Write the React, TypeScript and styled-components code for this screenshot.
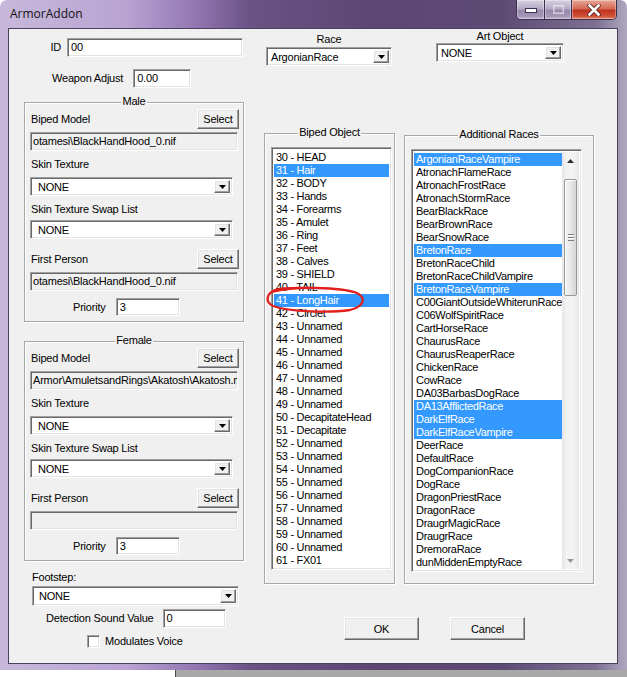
import React from 'react';
import styled, { createGlobalStyle, css } from 'styled-components';

const GlobalStyle = createGlobalStyle`
  html, body {
    margin: 0;
    padding: 0;
    background: #fff;
  }
  body {
    font-family: "Liberation Sans", Arial, sans-serif;
    font-size: 11px;
    letter-spacing: -0.2px;
    color: #000;
  }
`;

// classic 3D edges
const sunken = css`
  box-sizing: border-box;
  border: 1px solid;
  border-color: #a0a0a0 #fff #fff #a0a0a0;
  box-shadow: inset 1px 1px 0 #696969, inset -1px -1px 0 #e3e3e3;
`;

const raised = css`
  box-sizing: border-box;
  border: 1px solid;
  border-color: #fff #696969 #696969 #fff;
  box-shadow: inset -1px -1px 0 #a0a0a0, inset 1px 1px 0 #e3e3e3;
  background: #f0f0f0;
`;

const BIPED_NAMES: Record<number, string> = {
  30: 'HEAD', 31: 'Hair', 32: 'BODY', 33: 'Hands', 34: 'Forearms', 35: 'Amulet',
  36: 'Ring', 37: 'Feet', 38: 'Calves', 39: 'SHIELD', 40: 'TAIL', 41: 'LongHair',
  42: 'Circlet', 50: 'DecapitateHead', 51: 'Decapitate', 61: 'FX01',
};
const BIPED_SLOTS = Array.from({ length: 32 }, (_, i) => {
  const n = 30 + i;
  return { label: `${n} - ${BIPED_NAMES[n] ?? 'Unnamed'}`, selected: n === 31 || n === 41 };
});

const RACES = [
  'ArgonianRaceVampire', 'AtronachFlameRace', 'AtronachFrostRace', 'AtronachStormRace',
  'BearBlackRace', 'BearBrownRace', 'BearSnowRace', 'BretonRace', 'BretonRaceChild',
  'BretonRaceChildVampire', 'BretonRaceVampire', 'C00GiantOutsideWhiterunRace',
  'C06WolfSpiritRace', 'CartHorseRace', 'ChaurusRace', 'ChaurusReaperRace', 'ChickenRace',
  'CowRace', 'DA03BarbasDogRace', 'DA13AfflictedRace', 'DarkElfRace', 'DarkElfRaceVampire',
  'DeerRace', 'DefaultRace', 'DogCompanionRace', 'DogRace', 'DragonPriestRace', 'DragonRace',
  'DraugrMagicRace', 'DraugrRace', 'DremoraRace', 'dunMiddenEmptyRace',
];
const SELECTED_RACES = [0, 7, 10, 19, 20, 21];

/* ---------- window chrome ---------- */

const Window = styled.div`
  width: 627px;
  height: 670px;
  box-sizing: border-box;
  padding: 0 9px 6px 8px;
  display: flex;
  flex-direction: column;
  border-radius: 7px 7px 0 0;
  background: linear-gradient(90deg, #c7b8db 0%, #b9a4d2 20%, #9377b3 31%, #6a5284 40%, #5c4773 60%, #5e4b74 80%, #7d6f93 95%, #b0a8bf 100%);
`;

const TitleBar = styled.div`
  height: 28px;
  display: flex;
  align-items: flex-start;
`;

const TitleText = styled.div`
  margin-left: 2px;
  padding-top: 6px;
  line-height: 16px;
  font-family: "Open Sans", "Noto Sans", sans-serif;
  font-size: 12px;
  letter-spacing: 0;
  color: #111;
`;

const CaptionButtons = styled.div`
  margin-left: auto;
  margin-right: 1px;
  display: flex;
  height: 20px;
  box-sizing: border-box;
  border: 1px solid #3b2f4d;
  border-top: none;
  border-radius: 0 0 5px 5px;
  overflow: hidden;
`;

const CaptionButton = styled.div<{ $w: number; $close?: boolean }>`
  width: ${({ $w }) => $w}px;
  display: flex;
  align-items: center;
  justify-content: center;
  box-shadow: inset 0 0 0 1px rgba(255, 255, 255, 0.35);
  background: ${({ $close }) =>
    $close
      ? 'linear-gradient(180deg, #e9a897 0%, #d46a55 45%, #c0341f 55%, #d0503a 85%, #e48a6a 100%)'
      : 'linear-gradient(180deg, #d7d0e0 0%, #b6abc6 45%, #978aac 55%, #a396b6 85%, #bdb2cc 100%)'};
  & + & {
    border-left: 1px solid #3b2f4d;
  }
`;

const Desktop = styled.div`
  display: flex;
  height: 7px;
`;

const DesktopPaper = styled.div`
  width: 175px;
  background: #fff;
  border-right: 1px solid #4a4a4a;
`;

const DesktopShade = styled.div`
  flex: 1;
  background: #a9a9a9;
`;

const Client = styled.div`
  flex: 1;
  display: flex;
  flex-direction: column;
  background: #f0f0f0;
  border: 1px solid #4c405f;
`;

/* ---------- basic controls ---------- */

const Label = styled.div`
  line-height: 13px;
  white-space: nowrap;
`;

const FieldLabel = styled(Label)<{ $mt: number }>`
  margin-top: ${({ $mt }) => $mt}px;
  padding-left: 1px;
`;

const Edit = styled.div<{ $w: number; $h?: number; $readOnly?: boolean; $mt?: number }>`
  ${sunken};
  flex: none;
  width: ${({ $w }) => $w}px;
  height: ${({ $h = 19 }) => $h}px;
  line-height: ${({ $h = 19 }) => $h - 2}px;
  margin-top: ${({ $mt = 0 }) => $mt}px;
  padding-left: ${({ $readOnly }) => ($readOnly ? 2 : 3)}px;
  background: ${({ $readOnly }) => ($readOnly ? '#f0f0f0' : '#fff')};
  white-space: nowrap;
  overflow: hidden;
`;

const ComboBox = styled.div<{ $w: number; $h?: number; $mt?: number; $ml?: number }>`
  ${sunken};
  flex: none;
  display: flex;
  width: ${({ $w }) => $w}px;
  height: ${({ $h = 19 }) => $h}px;
  margin-top: ${({ $mt = 0 }) => $mt}px;
  margin-left: ${({ $ml = 0 }) => $ml}px;
  padding: 2px;
  background: #fff;
`;

const ComboText = styled.div<{ $indent: number }>`
  flex: 1;
  padding-left: ${({ $indent }) => $indent}px;
  display: flex;
  align-items: center;
  white-space: nowrap;
  overflow: hidden;
`;

const ComboButton = styled.div`
  ${raised};
  width: 16px;
  display: flex;
  align-items: center;
  justify-content: center;
`;

const PushButton = styled.div<{ $w: number; $h: number }>`
  ${raised};
  flex: none;
  width: ${({ $w }) => $w}px;
  height: ${({ $h }) => $h}px;
  display: flex;
  align-items: center;
  justify-content: center;
`;

const CheckBox = styled.div`
  ${sunken};
  width: 13px;
  height: 13px;
  background: #fff;
`;

function DownArrow({ color = '#000' }: { color?: string }) {
  return (
    <svg width="7" height="4" viewBox="0 0 7 4">
      <path d="M0 0h7L3.5 4z" fill={color} />
    </svg>
  );
}

function Combo({ value, w, h, indent = 2, mt, ml }: { value: string; w: number; h?: number; indent?: number; mt?: number; ml?: number }) {
  return (
    <ComboBox $w={w} $h={h} $mt={mt} $ml={ml}>
      <ComboText $indent={indent}>{value}</ComboText>
      <ComboButton><DownArrow /></ComboButton>
    </ComboBox>
  );
}

/* ---------- group boxes ---------- */

const GroupBox = styled.div<{ $w: number; $h: number; $mt?: number; $ml?: number; $pad?: string }>`
  position: relative;
  box-sizing: border-box;
  flex: none;
  display: flex;
  flex-direction: column;
  width: ${({ $w }) => $w}px;
  height: ${({ $h }) => $h}px;
  margin-top: ${({ $mt = 0 }) => $mt}px;
  margin-left: ${({ $ml = 0 }) => $ml}px;
  padding: ${({ $pad = '0' }) => $pad};
  border: 1px solid #a7a7a7;
  box-shadow: inset 1px 1px 0 #fff, 1px 1px 0 #fff;
`;

const GroupTitle = styled.div`
  position: absolute;
  top: -8px;
  left: 0;
  right: 0;
  text-align: center;
  line-height: 13px;
  pointer-events: none;
`;

const GroupTitleText = styled.span`
  background: #f0f0f0;
  padding: 0 1px;
`;

const HeaderRow = styled.div<{ $mt?: number }>`
  display: flex;
  align-items: center;
  justify-content: space-between;
  margin-top: ${({ $mt = 0 }) => $mt}px;
  padding-left: 1px;
`;

const PriorityRow = styled.div`
  display: flex;
  align-items: center;
  gap: 10px;
  margin-top: 7px;
  padding-left: 43px;
`;

type ArmorGroupProps = {
  title: string;
  model: string;
  firstPerson: string;
  mt?: number;
};

function ArmorGroup({ title, model, firstPerson, mt }: ArmorGroupProps) {
  return (
    <GroupBox $w={220} $h={220} $mt={mt} $pad="6px 4px 0 5px">
      <GroupTitle><GroupTitleText>{title}</GroupTitleText></GroupTitle>
      <HeaderRow>
        <Label>Biped Model</Label>
        <PushButton $w={42} $h={20}>Select</PushButton>
      </HeaderRow>
      <Edit $w={208} $mt={3} $readOnly>{model}</Edit>
      <FieldLabel $mt={7}>Skin Texture</FieldLabel>
      <Combo value="NONE" w={203} indent={5} mt={6} />
      <FieldLabel $mt={7}>Skin Texture Swap List</FieldLabel>
      <Combo value="NONE" w={203} indent={5} mt={4} />
      <HeaderRow $mt={10}>
        <Label>First Person</Label>
        <PushButton $w={42} $h={20}>Select</PushButton>
      </HeaderRow>
      <Edit $w={208} $mt={3} $readOnly>{firstPerson}</Edit>
      <PriorityRow>
        <Label>Priority</Label>
        <Edit $w={64} $h={18}>3</Edit>
      </PriorityRow>
    </GroupBox>
  );
}

/* ---------- list boxes ---------- */

const ListBox = styled.div<{ $w: number; $h: number }>`
  ${sunken};
  flex: none;
  display: flex;
  width: ${({ $w }) => $w}px;
  height: ${({ $h }) => $h}px;
  padding: 2px;
  background: #fff;
`;

const ListRows = styled.div`
  flex: 1;
  min-width: 0;
  padding-top: 1px;
  overflow: hidden;
`;

const ListRow = styled.div<{ $selected?: boolean }>`
  height: 13px;
  line-height: 13px;
  padding-left: 2px;
  white-space: nowrap;
  letter-spacing: -0.3px;
  background: ${({ $selected }) => ($selected ? '#3399ff' : 'transparent')};
  color: ${({ $selected }) => ($selected ? '#fff' : '#000')};
`;

const ScrollBar = styled.div`
  width: 17px;
  display: flex;
  flex-direction: column;
  background: linear-gradient(90deg, #e6e6e6 0%, #f3f3f3 30%, #f3f3f3 70%, #e6e6e6 100%);
`;

const ScrollArrow = styled.div`
  height: 17px;
  display: flex;
  align-items: center;
  justify-content: center;
`;

const ScrollTrack = styled.div`
  flex: 1;
  padding: 10px 2px 0;
`;

const ScrollThumb = styled.div`
  box-sizing: border-box;
  height: 117px;
  display: flex;
  align-items: center;
  justify-content: center;
  border: 1px solid #979797;
  border-radius: 2px;
  background: linear-gradient(90deg, #f4f4f4 0%, #e8e8e8 50%, #d6d6d6 100%);
  box-shadow: inset 1px 1px 0 #fff;
`;

const ThumbGrip = styled.div`
  width: 6px;
  height: 7px;
  background: repeating-linear-gradient(180deg, #7e7e7e 0 1px, #fff 1px 2px, transparent 2px 3px);
`;

function UpArrow({ color }: { color: string }) {
  return (
    <svg width="7" height="4" viewBox="0 0 7 4">
      <path d="M0 4h7L3.5 0z" fill={color} />
    </svg>
  );
}

// hand drawn red circle around the LongHair slot
const Annotation = styled.svg`
  position: absolute;
  left: 0;
  top: 0;
  overflow: visible;
  pointer-events: none;
`;

/* ---------- dialog layout ---------- */

const TopRow = styled.div`
  height: 73px;
  display: flex;
  align-items: flex-start;
`;

const IdBlock = styled.div`
  width: 234px;
  padding-top: 9px;
  display: flex;
  flex-direction: column;
`;

const IdRow = styled.div`
  display: flex;
  align-items: center;
  justify-content: flex-end;
  gap: 6px;
`;

const WeaponRow = styled.div`
  display: flex;
  align-items: center;
  gap: 10px;
  margin-top: 12px;
  padding-left: 43px;
`;

const PickerBlock = styled.div<{ $w: number; $ml: number; $pt: number }>`
  width: ${({ $w }) => $w}px;
  margin-left: ${({ $ml }) => $ml}px;
  padding-top: ${({ $pt }) => $pt}px;
  display: flex;
  flex-direction: column;
  align-items: center;
`;

const MainRow = styled.div`
  display: flex;
  align-items: flex-start;
`;

const LeftColumn = styled.div`
  width: 220px;
  margin-left: 15px;
  display: flex;
  flex-direction: column;
`;

const FootstepLabel = styled(Label)`
  margin-top: 10px;
  padding-left: 8px;
`;

const DetectionRow = styled.div`
  display: flex;
  align-items: center;
  gap: 9px;
  margin-top: 3px;
  padding-left: 22px;
`;

const CheckRow = styled.div`
  display: flex;
  align-items: center;
  gap: 5px;
  margin-top: 7px;
  padding-left: 63px;
`;

const RightArea = styled.div`
  margin-left: 20px;
  display: flex;
  flex-direction: column;
`;

const GroupsRow = styled.div`
  display: flex;
  align-items: flex-start;
`;

const ButtonsRow = styled.div`
  display: flex;
  gap: 31px;
  margin-top: 33px;
  padding-left: 80px;
`;

export default function App() {
  return (
    <>
      <GlobalStyle />
      <Window>
        <TitleBar>
          <TitleText>ArmorAddon</TitleText>
          <CaptionButtons>
            <CaptionButton $w={27}>
              <svg width="12" height="6" viewBox="0 0 12 6">
                <rect x="0.5" y="1.5" width="11" height="4" fill="#fff" stroke="#3c3050" />
              </svg>
            </CaptionButton>
            <CaptionButton $w={26}>
              <svg width="11" height="9" viewBox="0 0 11 9">
                <rect x="0.5" y="0.5" width="10" height="8" fill="none" stroke="rgba(255,255,255,0.55)" strokeWidth="2" />
              </svg>
            </CaptionButton>
            <CaptionButton $w={44} $close>
              <svg width="14" height="12" viewBox="0 0 14 12">
                <path d="M2.5 1.5l9 9M11.5 1.5l-9 9" stroke="#5b2320" strokeWidth="4.4" strokeLinecap="square" />
                <path d="M2.5 1.5l9 9M11.5 1.5l-9 9" stroke="#fff" strokeWidth="2.6" strokeLinecap="square" />
              </svg>
            </CaptionButton>
          </CaptionButtons>
        </TitleBar>

        <Client>
          <TopRow>
            <IdBlock>
              <IdRow>
                <Label>ID</Label>
                <Edit $w={176}>00</Edit>
              </IdRow>
              <WeaponRow>
                <Label>Weapon Adjust</Label>
                <Edit $w={58}>0.00</Edit>
              </WeaponRow>
            </IdBlock>
            <PickerBlock $w={126} $ml={23} $pt={4}>
              <Label>Race</Label>
              <Combo value="ArgonianRace" w={126} indent={2} mt={1} />
            </PickerBlock>
            <PickerBlock $w={128} $ml={44} $pt={1}>
              <Label>Art Object</Label>
              <Combo value="NONE" w={128} indent={2} />
            </PickerBlock>
          </TopRow>

          <MainRow>
            <LeftColumn>
              <ArmorGroup title="Male" model="otamesi\BlackHandHood_0.nif" firstPerson="otamesi\BlackHandHood_0.nif" />
              <ArmorGroup title="Female" model="Armor\AmuletsandRings\Akatosh\Akatosh.nif" firstPerson="" mt={19} />
              <FootstepLabel>Footstep:</FootstepLabel>
              <Combo value="NONE" w={207} h={20} indent={4} mt={2} ml={8} />
              <DetectionRow>
                <Label>Detection Sound Value</Label>
                <Edit $w={63}>0</Edit>
              </DetectionRow>
              <CheckRow>
                <CheckBox />
                <Label>Modulates Voice</Label>
              </CheckRow>
            </LeftColumn>

            <RightArea>
              <GroupsRow>
                <GroupBox $w={131} $h={451} $mt={31} $pad="13px 0 0 6px">
                  <GroupTitle><GroupTitleText>Biped Object</GroupTitleText></GroupTitle>
                  <ListBox $w={121} $h={423}>
                    <ListRows>
                      {BIPED_SLOTS.map(slot => (
                        <ListRow key={slot.label} $selected={slot.selected}>{slot.label}</ListRow>
                      ))}
                    </ListRows>
                  </ListBox>
                  <Annotation width="131" height="451">
                    <path
                      d="M7 158 C30 152, 75 153, 92 159 C101 164, 100 172, 85 176 C65 179, 25 178, 8 172 C0 168, 1 160, 10 156 C20 153, 35 154, 45 154"
                      fill="none"
                      stroke="#e0201c"
                      strokeWidth="2.3"
                      strokeLinecap="round"
                    />
                  </Annotation>
                </GroupBox>

                <GroupBox $w={190} $h={449} $mt={33} $ml={9} $pad="13px 0 0 6px">
                  <GroupTitle><GroupTitleText>Additional Races</GroupTitleText></GroupTitle>
                  <ListBox $w={171} $h={423}>
                    <ListRows>
                      {RACES.map((race, i) => (
                        <ListRow key={race} $selected={SELECTED_RACES.includes(i)}>{race}</ListRow>
                      ))}
                    </ListRows>
                    <ScrollBar>
                      <ScrollArrow><UpArrow color="#2e2e2e" /></ScrollArrow>
                      <ScrollTrack>
                        <ScrollThumb><ThumbGrip /></ScrollThumb>
                      </ScrollTrack>
                      <ScrollArrow><DownArrow color="#9a9a9a" /></ScrollArrow>
                    </ScrollBar>
                  </ListBox>
                </GroupBox>
              </GroupsRow>

              <ButtonsRow>
                <PushButton $w={75} $h={23}>OK</PushButton>
                <PushButton $w={75} $h={23}>Cancel</PushButton>
              </ButtonsRow>
            </RightArea>
          </MainRow>
        </Client>
      </Window>
      <Desktop>
        <DesktopPaper />
        <DesktopShade />
      </Desktop>
    </>
  );
}
